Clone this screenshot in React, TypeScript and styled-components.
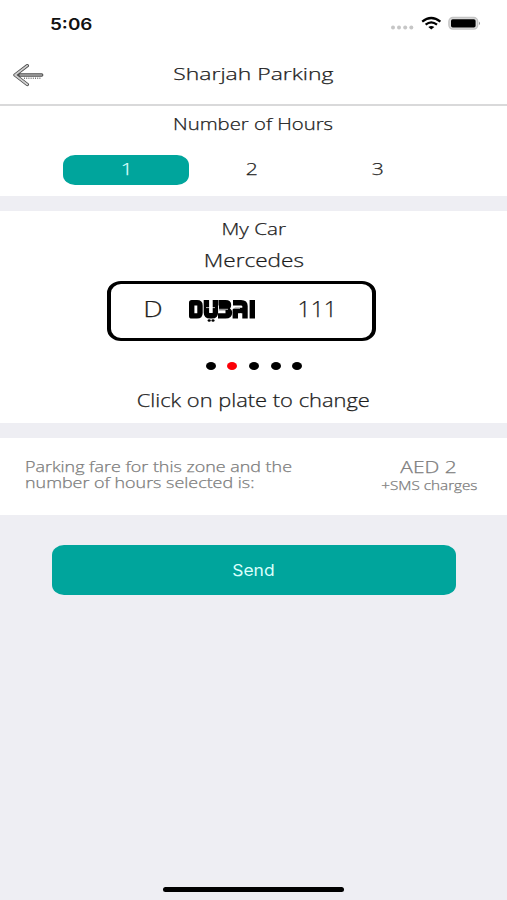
import React from "react";
import styled, { createGlobalStyle } from "styled-components";

const TEAL = "#00a59c";
const BAND = "#eeeef3";

const GlobalStyle = createGlobalStyle`
  * { box-sizing: border-box; }
  body { margin: 0; background: ${BAND}; font-family: "Open Sans", "Noto Sans", sans-serif; }
`;

const Screen = styled.main`
  display: flex;
  flex-direction: column;
  width: 507px;
  height: 900px;
  overflow: hidden;
  background: ${BAND};
`;

/* The interface type is set wide, so every label is stretched horizontally. */
const Label = styled.span<{ $size: number; $wide?: number; $color?: string; $weight?: number; $origin?: string }>`
  display: block;
  width: max-content;
  white-space: pre;
  font-size: ${(p) => p.$size}px;
  line-height: 20px;
  font-weight: ${(p) => p.$weight ?? 300};
  color: ${(p) => p.$color ?? "#1c1c1c"};
  -webkit-text-stroke: 0.25px currentColor;
  transform: scaleX(${(p) => p.$wide ?? 1.28});
  transform-origin: ${(p) => p.$origin ?? "center"};
`;

const StatusBar = styled.div`
  display: flex;
  justify-content: space-between;
  height: 46px;
  padding: 14px 26px 0 49.5px;
  background: #fff;
`;

const Clock = styled(Label)`
  font-family: Inter, sans-serif;
  -webkit-text-stroke: 0;
`;

const StatusIcons = styled.div`
  display: flex;
  height: 20px;
  svg { display: block; }
`;

const Header = styled.header`
  display: grid;
  grid-template-columns: 60px 1fr 60px;
  justify-items: center;
  height: 60px;
  padding-top: 18px;
  background: #fff;
  border-bottom: 2px solid #d9d9da;
`;

const BackButton = styled.button`
  justify-self: start;
  height: 24px;
  margin: 0 0 0 12px;
  padding: 0;
  border: 0;
  background: none;
  svg { display: block; }
`;

const Panel = styled.section<{ $height: number; $top: number }>`
  display: flex;
  flex-direction: column;
  align-items: center;
  height: ${(p) => p.$height}px;
  padding-top: ${(p) => p.$top}px;
  margin-bottom: 15px;
  background: #fff;
`;

const Hours = styled.div`
  display: grid;
  grid-template-columns: 126px 124px 128px;
  width: 381px;
  margin-top: 21.4px;
`;

const Hour = styled.button<{ $active?: boolean }>`
  display: flex;
  justify-content: center;
  height: 30px;
  padding: 3.4px 0 0 1px;
  border: 0;
  border-radius: 12px / 10px;
  background: ${(p) => (p.$active ? TEAL : "transparent")};
  font-family: inherit;
`;

const Plate = styled.button`
  display: grid;
  grid-template-columns: 84px 54px 1fr;
  justify-items: center;
  align-items: start;
  width: 269px;
  height: 60px;
  margin: 11px 24px 0 0;
  padding: 14px 0 0;
  border: 3px solid #000;
  border-left-width: 4px;
  border-right-width: 4px;
  border-radius: 14px / 12px;
  background: #fff;
  font-family: inherit;
  svg { display: block; }
`;

const PlateText = styled(Label)<{ $shift?: number }>`
  margin: 1px 0 0 ${(p) => p.$shift ?? 0}px;
`;

const Dots = styled.div`
  display: flex;
  gap: 11.6px;
  margin: 21px 0 0 1px;
`;

const Dot = styled.i<{ $active?: boolean }>`
  width: 10px;
  height: 8px;
  border-radius: 50%;
  background: ${(p) => (p.$active ? "#fb0007" : "#000")};
`;

const Fare = styled.section`
  display: flex;
  justify-content: space-between;
  height: 77px;
  padding: 20.5px 30px 0 24.5px;
  background: #fff;
`;

const Note = styled(Label)`
  line-height: 16.5px;
`;

const Price = styled.div`
  display: flex;
  flex-direction: column;
  align-items: center;
  width: 96px;
  margin-top: -1.5px;
`;

const SendButton = styled.button`
  display: flex;
  justify-content: center;
  width: 404px;
  height: 50px;
  margin: 30px 0 0 52px;
  padding: 15px 1px 0 0;
  border: 0;
  border-radius: 12px / 10px;
  background: ${TEAL};
`;

const HomeBar = styled.div`
  width: 181px;
  height: 5px;
  margin: auto auto 8px 163px;
  border-radius: 3px;
  background: #000;
`;

const Spaced = styled.div<{ $top: number }>`
  margin-top: ${(p) => p.$top}px;
`;

const Signal = () => (
  <svg width="94" height="20" viewBox="0 0 94 20">
    <g fill="#c6c6c6">
      <circle cx="6" cy="13.6" r="2" />
      <circle cx="12" cy="13.6" r="2" />
      <circle cx="18.2" cy="13.6" r="2" />
      <circle cx="24.3" cy="13.6" r="2" />
    </g>
    <g fill="none" stroke="#000" strokeWidth="2.2">
      <path d="M35.2 7.7Q44.2 .3 53.4 7.7" />
      <path d="M38.6 10.6Q44.2 6 50 10.6" />
    </g>
    <path d="M41.3 13.1Q44.3 10.8 47.3 13.1L44.3 15.6Z" />
    <rect x="61.9" y="3.5" width="28.8" height="11.6" rx="4" fill="#ddd" stroke="#c4c4c4" strokeWidth="1.4" />
    <rect x="64" y="5.2" width="24.6" height="8.2" rx="1.7" />
    <path d="M92.1 7.6Q94 9.4 92.1 11.1Z" fill="#888" />
  </svg>
);

const BackArrow = () => (
  <svg width="34" height="24" viewBox="0 0 34 24" fill="none" strokeLinecap="round" strokeLinejoin="round">
    <path d="M15.3 1.7L3 11L15.3 20.5M7 11H29.7" stroke="#4d4d4d" strokeWidth="3.4" />
    <path d="M15.3 1.7L3 11L15.3 20.5" stroke="#d0d0d0" strokeWidth="1.6" />
    <path d="M8 11H29.7" stroke="#a9a9a9" strokeWidth="1.4" />
    <path d="M12 14.2H29" stroke="#777" strokeWidth="1.5" strokeDasharray="1 1.2" strokeLinecap="butt" />
  </svg>
);

const DubaiMark = () => (
  <svg width="68" height="24" viewBox="0 0 68 24" role="img" aria-label="Dubai">
    <g fill="none" stroke="#000" strokeWidth="5.4" strokeLinejoin="round">
      <path d="M3.7 4.7H9Q12 4.7 12 7.5V15Q12 17.9 9 17.9H3.7Z" />
      <path d="M18.4 2V14.5Q18.4 17.8 22 17.8H24Q27.4 17.8 27.4 14.5V2" />
      <path d="M30.5 4.7H37.5Q40.5 4.7 40.5 7Q40.5 9.5 37.5 9.5H31M37.5 12.5Q41.5 12.5 41.5 14.5Q41.5 17.9 37.5 17.9H30" />
      <path d="M45 4.7H53Q57 4.7 57 8V20.5M47.3 20.5V12.5H56" />
      <path d="M64.3 2V20.5" />
    </g>
    <path d="M18 9.6H27M31 11.3H40M44 10.3H52M52.3 15V20.5" stroke="#fff" strokeWidth=".7" />
    <ellipse cx="21.2" cy="22.5" rx="1.6" ry="1.2" />
    <ellipse cx="25" cy="22.5" rx="1.6" ry="1.2" />
  </svg>
);

export default function App() {
  return (
    <Screen>
      <GlobalStyle />
      <StatusBar>
        <Clock $size={16} $weight={600} $wide={1.18} $color="#111" $origin="left">5:06</Clock>
        <StatusIcons><Signal /></StatusIcons>
      </StatusBar>
      <Header>
        <BackButton aria-label="Back"><BackArrow /></BackButton>
        <Label $size={17} $wide={1.35}>Sharjah Parking</Label>
      </Header>
      <Panel $height={90} $top={8}>
        <Label $size={16.5} $wide={1.23}>Number of Hours</Label>
        <Hours>
          <Hour $active><Label $size={16.5} $color="#d9fffb">1</Label></Hour>
          <Hour><Label $size={16.5}>2</Label></Hour>
          <Hour><Label $size={16.5}>3</Label></Hour>
        </Hours>
      </Panel>
      <Panel $height={212} $top={8}>
        <Label $size={16.5} $wide={1.25}>My Car</Label>
        <Spaced $top={11}><Label $size={17.5} $wide={1.29}>Mercedes</Label></Spaced>
        <Plate>
          <PlateText $size={22.5} $wide={1.22}>D</PlateText>
          <DubaiMark />
          <PlateText $size={22.5} $wide={1.02} $shift={13}>111</PlateText>
        </Plate>
        <Dots><Dot /><Dot $active /><Dot /><Dot /><Dot /></Dots>
        <Spaced $top={20}><Label $size={17.5} $wide={1.25}>Click on plate to change</Label></Spaced>
      </Panel>
      <Fare>
        <Note $size={14.5} $wide={1.234} $color="#7c7c7c" $origin="left">{"Parking fare for this zone and the\nnumber of hours selected is:"}</Note>
        <Price>
          <Label $size={16} $wide={1.31} $color="#7c7c7c">AED 2</Label>
          <Spaced $top={-1}><Label $size={12.5} $wide={1.22} $color="#7c7c7c">+SMS charges</Label></Spaced>
        </Price>
      </Fare>
      <SendButton><Clock $size={16} $weight={400} $wide={1.09} $color="#d9fffb">Send</Clock></SendButton>
      <HomeBar />
    </Screen>
  );
}
